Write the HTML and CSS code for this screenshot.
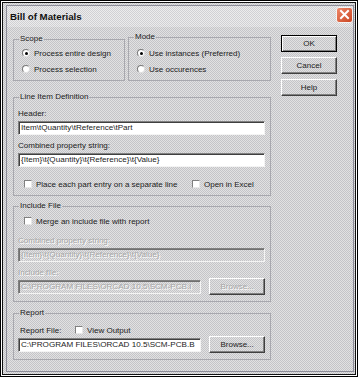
FILE: index.html
```html
<!DOCTYPE html>
<html lang="en">
<head>
  <meta charset="UTF-8">
  <title>Bill of Materials</title>
  <link rel="stylesheet" href="styles.css">
</head>
<body>
<div class="screen">
  <div class="dialog">
    <div class="window">
      <div class="titlebar">
        <span class="title">Bill of Materials</span>
        <span class="close">
          <svg width="17" height="16" viewBox="0 0 17 16">
            <defs>
              <linearGradient id="red" x1="0" y1="0" x2="1" y2="1">
                <stop offset="0" stop-color="#f08a6c"/>
                <stop offset="1" stop-color="#c8431f"/>
              </linearGradient>
            </defs>
            <rect x="0.5" y="0.5" width="16" height="15" rx="2.5" fill="url(#red)" stroke="#f4f4f4"/>
            <path d="M5 4 L12 11 M12 4 L5 11" stroke="#fff" stroke-width="2" stroke-linecap="square"/>
          </svg>
        </span>
      </div>
      <div class="client">
        <div class="main">
          <!--Scope / Mode-->
          <div class="top">
            <fieldset class="group scope">
              <legend>Scope</legend>
              <div class="options">
                <div class="option"><span class="radio on"></span>Process entire design</div>
                <div class="option"><span class="radio"></span>Process selection</div>
              </div>
            </fieldset>
            <fieldset class="group mode">
              <legend>Mode</legend>
              <div class="options">
                <div class="option"><span class="radio on"></span>Use instances (Preferred)</div>
                <div class="option"><span class="radio"></span>Use occurences</div>
              </div>
            </fieldset>
          </div>

          <!--Line Item Definition-->
          <fieldset class="group line-item">
            <legend>Line Item Definition</legend>
            <div class="field-label first">Header:</div>
            <div class="textbox">Item\tQuantity\tReference\tPart</div>
            <div class="field-label">Combined property string:</div>
            <div class="textbox">{Item}\t{Quantity}\t{Reference}\t{Value}</div>
            <div class="check-row">
              <div class="check wide"><span class="box"></span>Place each part entry on a separate line</div>
              <div class="check"><span class="box"></span>Open in Excel</div>
            </div>
          </fieldset>

          <!--Include File-->
          <fieldset class="group include">
            <legend>Include File</legend>
            <div class="check-row">
              <div class="check"><span class="box"></span>Merge an include file with report</div>
            </div>
            <div class="field-label disabled">Combined property string:</div>
            <div class="textbox disabled">{Item}\t{Quantity}\t{Reference}\t{Value}</div>
            <div class="field-label disabled">Include file:</div>
            <div class="file-row">
              <div class="textbox short disabled">C:\PROGRAM FILES\ORCAD 10.5\SCM-PCB.I</div>
              <div class="btn disabled">Browse...</div>
            </div>
          </fieldset>

          <!--Report-->
          <fieldset class="group report">
            <legend>Report</legend>
            <div class="report-row">
              <span class="report-label">Report File:</span>
              <div class="check"><span class="box"></span>View Output</div>
            </div>
            <div class="file-row">
              <div class="textbox short">C:\PROGRAM FILES\ORCAD 10.5\SCM-PCB.B</div>
              <div class="btn">Browse...</div>
            </div>
          </fieldset>
        </div>

        <div class="buttons">
          <div class="btn default">OK</div>
          <div class="btn">Cancel</div>
          <div class="btn">Help</div>
        </div>
      </div>
    </div>
  </div>
</div>
</body>
</html>
```
FILE: styles.css
```css
body {
  margin: 0;
  font-family: "Liberation Sans", Arial, sans-serif;
  font-size: 8px;
  color: #1c1c1c;
}

.screen {
  width: 358px;
  height: 377px;
  box-sizing: border-box;
  border: 1px solid #000;
  padding: 1px;
  background: #fff;
}

.dialog {
  height: 100%;
  box-sizing: border-box;
  border: 1px solid #111;
  padding: 2px 1px 2px 3px;
  background: repeating-conic-gradient(#c4c4c8 0% 25%, #e2e2e2 0% 50%) 0 0 / 2px 2px;
}

.window {
  height: 100%;
  box-sizing: border-box;
  border: 1px solid #8c8c98;
  background: repeating-conic-gradient(#c4c4c8 0% 25%, #e2e2e2 0% 50%) 0 0 / 2px 2px;
}

.titlebar {
  height: 21px;
  display: flex;
  align-items: center;
  padding-left: 3px;
  background: repeating-conic-gradient(#d0d0d4 0% 25%, #ececec 0% 50%) 0 0 / 2px 2px;
}

.title {
  font-weight: bold;
  font-size: 9.7px;
  line-height: 10px;
  color: #111;
}

.close {
  margin-left: auto;
  align-self: flex-start;
  margin-top: 1px;
  height: 16px;
}

.close svg {
  display: block;
}

.client {
  display: flex;
  padding: 0 0 0 6px;
}

.main {
  width: 258px;
}

.top {
  display: flex;
  gap: 3px;
  padding-top: 5px;
}

.group {
  margin: 0;
  padding: 0 5px 0 4px;
  border: 1px solid #a8a8ae;
  min-width: 0;
}

.group legend {
  padding: 0 1px;
  margin-left: 1px;
  line-height: 10px;
}

.scope {
  width: 112px;
  box-sizing: border-box;
  margin-top: 2px;
}

.mode {
  width: 143px;
  box-sizing: border-box;
}

.scope .options {
  margin-top: 2px;
  padding-bottom: 4px;
}

.mode .options {
  margin-top: 4px;
  padding-bottom: 4px;
}

.option {
  display: flex;
  align-items: center;
  gap: 4px;
  height: 14px;
  padding-left: 4px;
}

.option + .option {
  margin-top: 2px;
}

.radio {
  width: 8px;
  height: 8px;
  box-sizing: border-box;
  border-radius: 50%;
  background: #fff;
  border: 1px solid;
  border-color: #7a7a7a #e0e0e0 #e0e0e0 #7a7a7a;
  position: relative;
}

.radio.on::after {
  content: "";
  position: absolute;
  left: 1.5px;
  top: 1.5px;
  width: 3px;
  height: 3px;
  background: #000;
  border-radius: 50%;
}

.line-item {
  margin-top: 11px;
  padding-bottom: 5px;
}

.field-label {
  line-height: 10px;
  margin-top: 6px;
}

.field-label.first {
  margin-top: 7px;
}

.textbox {
  height: 14px;
  box-sizing: border-box;
  margin-top: 2px;
  border: 1px solid;
  border-color: #808080 #f4f4f4 #f4f4f4 #808080;
  box-shadow: inset 1px 1px 0 #404040;
  background: #fff;
  font-size: 8.1px;
  line-height: 12px;
  padding-left: 2px;
  white-space: nowrap;
  overflow: hidden;
}

.check-row {
  display: flex;
  align-items: center;
  height: 12px;
  margin-top: 11px;
}

.check {
  display: flex;
  align-items: center;
  gap: 4px;
  padding-left: 6px;
  white-space: nowrap;
}

.check.wide {
  width: 168px;
  box-sizing: border-box;
}

.box {
  width: 8px;
  height: 8px;
  box-sizing: border-box;
  background: #fff;
  border: 1px solid;
  border-color: #808080 #e8e8e8 #e8e8e8 #808080;
}

.include {
  margin-top: 5px;
  padding-bottom: 6px;
}

.include .check-row {
  margin-top: 4px;
}

.include .field-label {
  margin-top: 9px;
}

.include .textbox + .field-label {
  margin-top: 6px;
}

.disabled {
  color: #a6a6a6;
  text-shadow: 1px 1px 0 #fff;
}

.textbox.disabled {
  background: transparent;
  box-shadow: inset 1px 1px 0 #707070;
}

.file-row {
  display: flex;
  align-items: center;
  gap: 8px;
}

.file-row .textbox {
  margin-top: 0;
}

.textbox.short {
  width: 184px;
}

.report {
  margin-top: 6px;
  padding-bottom: 6px;
}

.report-row {
  display: flex;
  align-items: center;
  height: 12px;
  margin-top: 6px;
}

.report-label {
  width: 57px;
  padding-left: 2px;
  box-sizing: border-box;
}

.report-row .check {
  padding-left: 0;
}

.buttons {
  display: flex;
  flex-direction: column;
  gap: 5px;
  margin-left: 10px;
  padding-top: 8px;
}

.btn {
  width: 56px;
  height: 17px;
  box-sizing: border-box;
  display: flex;
  align-items: center;
  justify-content: center;
  border: 1px solid;
  border-color: #fff #404040 #404040 #fff;
  box-shadow: inset -1px -1px 0 #808080;
  font-size: 8px;
}

.btn.default {
  border-color: #000;
  box-shadow: inset 1px 1px 0 #fff, inset -1px -1px 0 #808080;
}
```
